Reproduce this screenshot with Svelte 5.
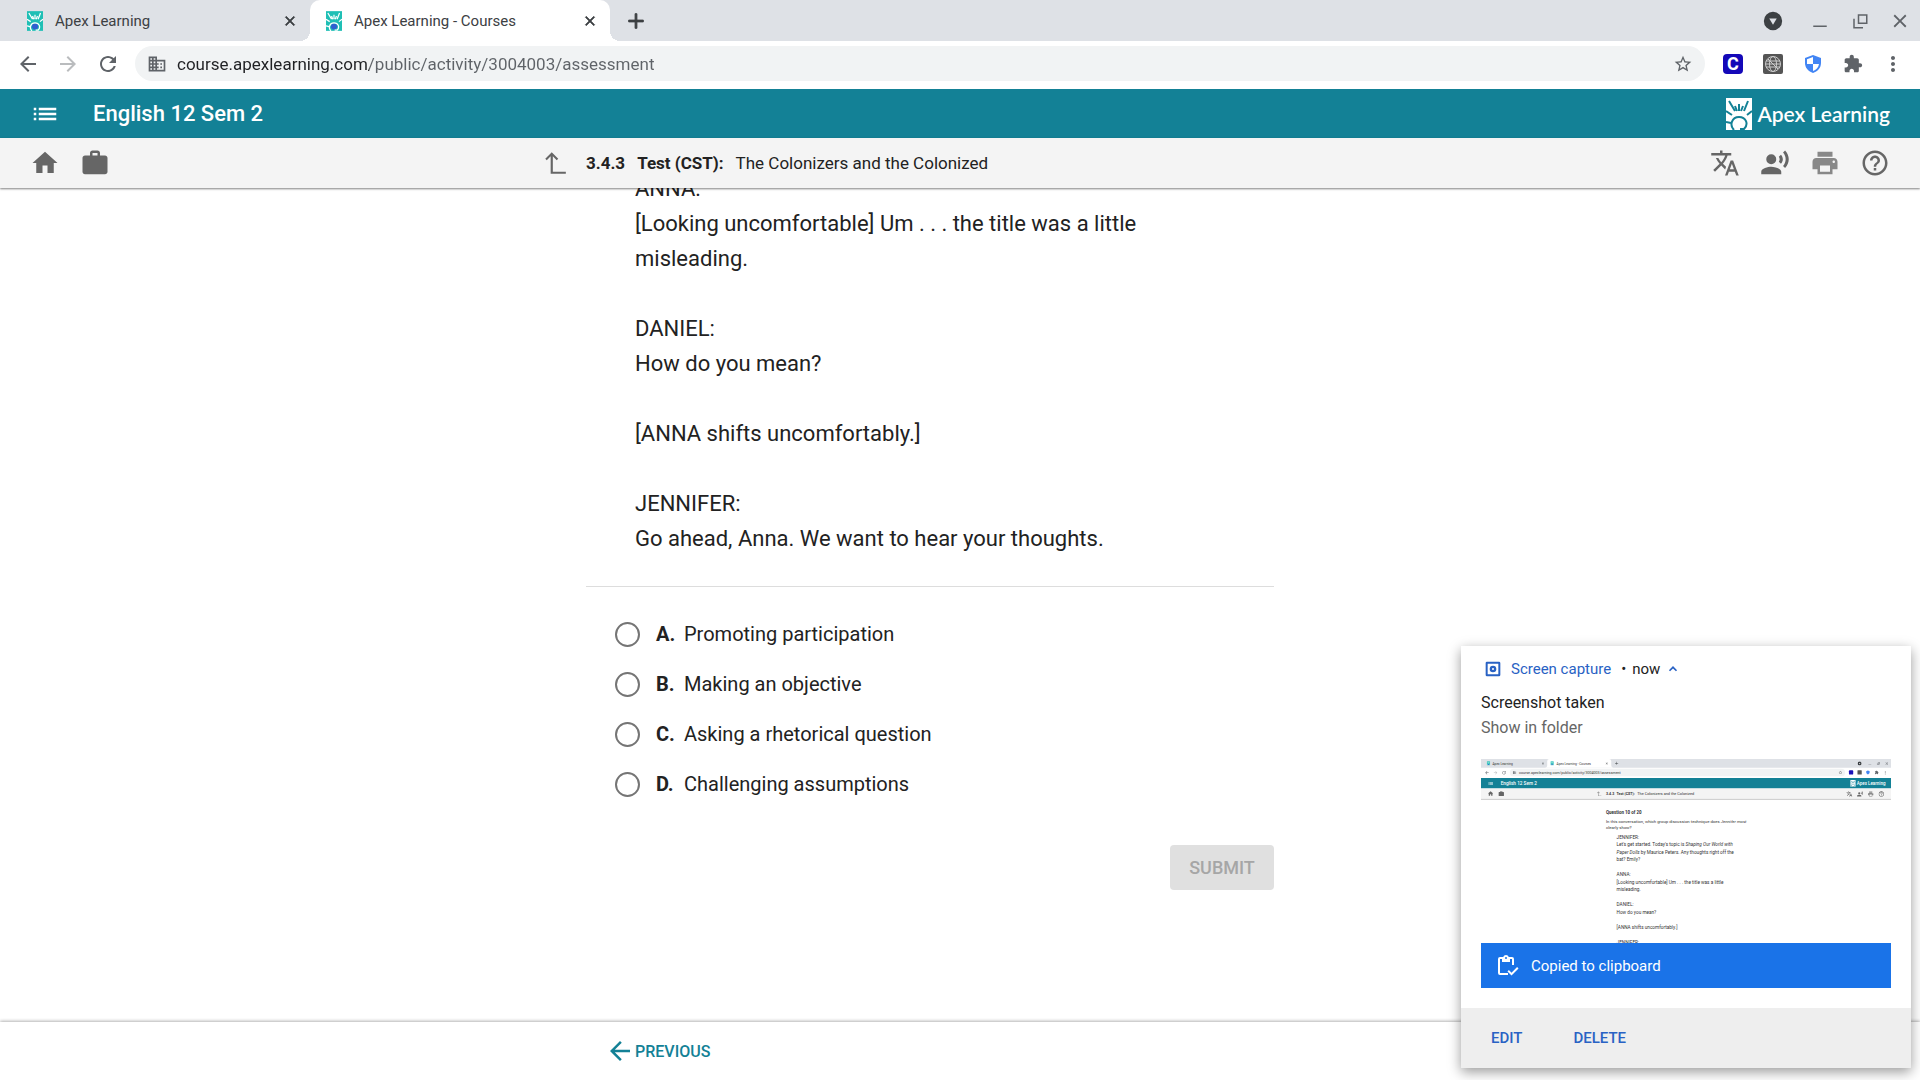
<script>
	const icons = {
		back: 'M20 11H7.83l5.59-5.59L12 4l-8 8 8 8 1.41-1.41L7.83 13H20v-2z',
		forward: 'M12 4l-1.41 1.41L16.17 11H4v2h12.17l-5.58 5.59L12 20l8-8z',
		refresh: 'M17.65 6.35C16.2 4.9 14.21 4 12 4c-4.42 0-7.99 3.58-7.99 8s3.57 8 7.99 8c3.73 0 6.84-2.55 7.73-6h-2.08c-.82 2.33-3.04 4-5.65 4-3.31 0-6-2.69-6-6s2.69-6 6-6c1.66 0 3.14.69 4.22 1.78L13 11h7V4l-2.35 2.35z',
		site: 'M12 7V3H2v18h20V7H12zM6 19H4v-2h2v2zm0-4H4v-2h2v2zm0-4H4V9h2v2zm0-4H4V5h2v2zm4 12H8v-2h2v2zm0-4H8v-2h2v2zm0-4H8V9h2v2zm0-4H8V5h2v2zm10 12h-8v-2h2v-2h-2v-2h2v-2h-2V9h8v10zm-2-8h-2v2h2v-2zm0 4h-2v2h2v-2z',
		star: 'M22 9.24l-7.19-.62L12 2 9.19 8.63 2 9.24l5.46 4.73L5.82 21 12 17.27 18.18 21l-1.63-7.03L22 9.24zM12 15.4l-3.76 2.27 1-4.28-3.32-2.88 4.38-.38L12 6.1l1.71 4.04 4.38.38-3.32 2.88 1 4.28L12 15.4z',
		extension: 'M20.5 11H19V7c0-1.1-.9-2-2-2h-4V3.5C13 2.12 11.88 1 10.5 1S8 2.12 8 3.5V5H4c-1.1 0-1.99.9-1.99 2v3.8H3.5c1.49 0 2.7 1.21 2.7 2.7s-1.21 2.7-2.7 2.7H2V20c0 1.1.9 2 2 2h3.8v-1.5c0-1.49 1.21-2.7 2.7-2.7 1.49 0 2.7 1.21 2.7 2.7V22H17c1.1 0 2-.9 2-2v-4h1.5c1.38 0 2.5-1.12 2.5-2.5S21.88 11 20.5 11z',
		more: 'M12 8c1.1 0 2-.9 2-2s-.9-2-2-2-2 .9-2 2 .9 2 2 2zm0 2c-1.1 0-2 .9-2 2s.9 2 2 2 2-.9 2-2-.9-2-2-2zm0 6c-1.1 0-2 .9-2 2s.9 2 2 2 2-.9 2-2-.9-2-2-2z',
		close: 'M19 6.41L17.59 5 12 10.59 6.41 5 5 6.41 10.59 12 5 17.59 6.41 19 12 13.41 17.59 19 19 17.59 13.41 12z',
		plus: 'M20 13h-7v7h-2v-7H4v-2h7V4h2v7h7z',
		minimize: 'M3 18h18v2H3z',
		restore: 'M9 3h13v13H9zM11 5v9h9V5zM3 9h2v11h11v2H3z',
		dropdown: 'M12 1a11 11 0 1 0 0 22a11 11 0 1 0 0-22zM7.5 9h9L12 16.5z',
		list: 'M3 13h2v-2H3v2zm0 4h2v-2H3v2zm0-8h2V7H3v2zm4 4h14v-2H7v2zm0 4h14v-2H7v2zM7 7v2h14V7H7z',
		home: 'M10 20v-6h4v6h5v-8h3L12 3 2 12h3v8z',
		work: 'M20 6h-4V4c0-1.1-.9-2-2-2h-4c-1.1 0-2 .9-2 2v2H4c-1.1 0-2 .9-2 2v11c0 1.1.9 2 2 2h16c1.1 0 2-.9 2-2V8c0-1.1-.9-2-2-2zm-6 0h-4V4h4v2z',
		up: 'M9 2l6 6-1.4 1.4L10 5.8V20h12v2H8V5.8L4.4 9.4 3 8z',
		translate: 'M12.87 15.07l-2.54-2.51.03-.03c1.74-1.94 2.98-4.17 3.71-6.53H17V4h-7V2H8v2H1v1.99h11.17C11.5 7.92 10.44 9.75 9 11.35 8.07 10.32 7.3 9.19 6.69 8h-2c.73 1.63 1.73 3.17 2.98 4.56l-5.09 5.02L4 19l5-5 3.11 3.11.76-2.04zM18.5 10h-2L12 22h2l1.12-3h4.75L21 22h2l-4.5-12zm-2.62 7l1.62-4.33L19.12 17h-3.24z',
		voice: 'M9 5a4 4 0 1 0 0 8a4 4 0 1 0 0-8zM9 15c-2.67 0-8 1.34-8 4v2h16v-2c0-2.66-5.33-4-8-4zm7.76-9.64l-1.68 1.69c.84 1.18.84 2.71 0 3.89l1.68 1.69c2.02-2.02 2.02-5.07 0-7.27zM20.07 2l-1.63 1.63c2.77 3.02 2.77 7.56 0 10.74L20.07 16c3.9-3.89 3.91-9.95 0-14z',
		print: 'M19 8H5c-1.66 0-3 1.34-3 3v6h4v4h12v-4h4v-6c0-1.66-1.34-3-3-3zm-3 11H8v-5h8v5zm3-7c-.55 0-1-.45-1-1s.45-1 1-1 1 .45 1 1-.45 1-1 1zm-1-9H6v4h12V3z',
		help: 'M11 18h2v-2h-2v2zm1-16C6.48 2 2 6.48 2 12s4.48 10 10 10 10-4.48 10-10S17.52 2 12 2zm0 18c-4.41 0-8-3.59-8-8s3.59-8 8-8 8 3.59 8 8-3.59 8-8 8zm0-14c-2.21 0-4 1.79-4 4h2c0-1.1.9-2 2-2s2 .9 2 2c0 2-3 1.75-3 5h2c0-2.25 3-2.5 3-5 0-2.21-1.79-4-4-4z',
		chevron: 'M12 7l-7 7 2 2L12 11l5 5 2-2z',
		capture: 'M3 1h18a2 2 0 0 1 2 2v18a2 2 0 0 1-2 2H3a2 2 0 0 1-2-2V3a2 2 0 0 1 2-2zM4 4v16h16V4zM12 7a5 5 0 1 1 0 10a5 5 0 1 1 0-10zM12 10.5a1.5 1.5 0 1 0 0 3a1.5 1.5 0 1 0 0-3z',
		clipboard: 'M12 21H4a2 2 0 0 1-2-2V5a2 2 0 0 1 2-2h3.2a3 3 0 0 1 5.6 0H16a2 2 0 0 1 2 2v6h-2V5h-2v3H6V5H4v14h8zM10 3a1 1 0 1 0 0 2a1 1 0 1 0 0-2zM15.5 21.5l-4-4 1.4-1.4 2.6 2.6 5.6-5.6 1.4 1.4z'
	};

	const tabs = [
		{ title: 'Apex Learning', active: false },
		{ title: 'Apex Learning - Courses', active: true }
	];

	const passage = [
		['ANNA:', '[Looking uncomfortable] Um . . . the title was a little misleading.'],
		['DANIEL:', 'How do you mean?'],
		['[ANNA shifts uncomfortably.]'],
		['JENNIFER:', 'Go ahead, Anna. We want to hear your thoughts.']
	];

	const options = [
		{ letter: 'A', text: 'Promoting participation' },
		{ letter: 'B', text: 'Making an objective' },
		{ letter: 'C', text: 'Asking a rhetorical question' },
		{ letter: 'D', text: 'Challenging assumptions' }
	];

	// lines of the captured page, in its own 1920 wide coordinates
	const captured = [
		{ y: 409, text: "Let's get started. Today's topic is ", em: 'Shaping Our World with' },
		{ y: 479, text: 'bat? Emily?' },
		{ y: 549, text: 'ANNA:' },
		{ y: 584, text: '[Looking uncomfortable] Um . . . the title was a little' },
		{ y: 619, text: 'misleading.' },
		{ y: 689, text: 'DANIEL:' },
		{ y: 724, text: 'How do you mean?' },
		{ y: 794, text: '[ANNA shifts uncomfortably.]' },
		{ y: 864, text: 'JENNIFER:' }
	];

	// icons in the captured page: name, x, y, size, fill
	const capturedIcons = [
		['close', 282, 13, 16, '#3c4043'],
		['close', 581, 13, 16, '#3c4043'],
		['plus', 624, 9, 22, '#3c4043'],
		['dropdown', 1763, 11, 20, '#3c4043'],
		['minimize', 1812, 11, 18, '#5f6368'],
		['restore', 1852, 12, 18, '#5f6368'],
		['close', 1890, 11, 21, '#5f6368'],
		['back', 16, 52, 24, '#5f6368'],
		['forward', 56, 52, 24, '#babcbe'],
		['refresh', 96, 52, 24, '#5f6368'],
		['site', 148, 55, 18, '#5f6368'],
		['star', 1673, 53, 20, '#5f6368'],
		['extension', 1843, 53, 20, '#5f6368'],
		['more', 1881, 52, 24, '#5f6368'],
		['list', 30, 99, 30, '#ffffff'],
		['home', 30, 147, 30, '#666666'],
		['work', 80, 147, 30, '#666666'],
		['up', 540, 150, 26, '#777777'],
		['translate', 1710, 149, 30, '#666666'],
		['voice', 1760, 149, 30, '#666666'],
		['print', 1810, 149, 30, '#888888'],
		['help', 1860, 149, 30, '#666666']
	];

	let selected = $state('');
	let address = $state('course.apexlearning.com/public/activity/3004003/assessment');
</script>

{#snippet icon(name, size = 24)}
	<svg class="icon" width={size} height={size} viewBox="0 0 24 24" aria-hidden="true">
		<path fill-rule="evenodd" d={icons[name]} />
	</svg>
{/snippet}

{#snippet sunburst(bg, fg, dot)}
	<rect width="26" height="32" fill={bg} />
	{#if dot}<circle cx="13" cy="25" r="5" fill={dot} />{/if}
	<g fill="none" stroke={fg} stroke-width="2">
		<path d="M3 3l6 10M0 13l6 4M9 8l2 5M13 6v7M17 8l-2 5M22 3l-4 10M26 13l-5 4M0 24l5 1" />
		<path d="M8 32c-5-5-2-13 5-13s10 7 5 12h-4" />
	</g>
{/snippet}

<div class="screen">
	<div class="tabstrip">
		{#each tabs as tab}
			<div class="tab" class:active={tab.active}>
				<svg width="16" height="20" viewBox="0 0 26 32" aria-hidden="true">
					{@render sunburst('#1fbfb5', '#ffffff', '#2f5fd0')}
				</svg>
				<span class="tab-title">{tab.title}</span>
				<button aria-label="Close tab">{@render icon('close', 16)}</button>
			</div>
		{/each}
		<button class="new-tab" aria-label="New tab">{@render icon('plus', 22)}</button>
		<div class="window-buttons">
			<button class="dark" aria-label="Search tabs">{@render icon('dropdown', 20)}</button>
			<button aria-label="Minimize">{@render icon('minimize', 18)}</button>
			<button aria-label="Restore">{@render icon('restore', 18)}</button>
			<button aria-label="Close window">{@render icon('close', 22)}</button>
		</div>
	</div>

	<div class="toolbar">
		<div class="nav-buttons">
			<button aria-label="Back">{@render icon('back')}</button>
			<button class="faded" aria-label="Forward">{@render icon('forward')}</button>
			<button aria-label="Reload">{@render icon('refresh')}</button>
		</div>
		<div class="omnibox">
			{@render icon('site', 20)}
			<input class="url" type="text" aria-label="Address" spellcheck="false" bind:value={address} />
			<button aria-label="Bookmark this page">{@render icon('star', 20)}</button>
		</div>
		<div class="extensions">
			<button class="ext-c" aria-label="C extension">C</button>
			<button aria-label="Globe extension">
				<svg width="20" height="20" viewBox="0 0 20 20">
					<rect width="20" height="20" rx="2" fill="#555555" />
					<g fill="none" stroke="#cccccc">
						<circle cx="10" cy="10" r="7.5" />
						<ellipse cx="10" cy="10" rx="3.5" ry="7.5" />
						<path d="M3 7h14M3 10h14M3 13h14M5 5l10 10" />
					</g>
				</svg>
			</button>
			<button aria-label="Shield extension">
				<svg width="20" height="20" viewBox="0 0 20 20">
					<path d="M10 1l8 3v5c0 5-3.5 8.5-8 10c-4.5-1.5-8-5-8-10V4z" fill="#4285f4" />
					<path d="M10 3v7H4V5.2zM10 10h6c-.5 3.5-3 6-6 7z" fill="#ffffff" />
				</svg>
			</button>
			<button aria-label="Extensions">{@render icon('extension', 20)}</button>
			<button aria-label="Menu">{@render icon('more', 24)}</button>
		</div>
	</div>

	<header class="course-bar">
		<button aria-label="Contents">{@render icon('list', 30)}</button>
		<h1>English 12 Sem 2</h1>
		<div class="brand">
			<svg width="26" height="32" viewBox="0 0 26 32" aria-hidden="true">
				{@render sunburst('#ffffff', '#138196', '')}
			</svg>
			<span>Apex Learning</span>
		</div>
	</header>

	<nav class="activity-bar">
		<div class="group">
			<button aria-label="Home">{@render icon('home', 30)}</button>
			<button aria-label="Portfolio">{@render icon('work', 30)}</button>
		</div>
		<div class="activity">
			<button class="up" aria-label="Up">{@render icon('up', 26)}</button>
			<p><b>3.4.3</b><b>Test (CST):</b>The Colonizers and the Colonized</p>
		</div>
		<div class="group right">
			<button aria-label="Translate">{@render icon('translate', 30)}</button>
			<button aria-label="Read aloud">{@render icon('voice', 30)}</button>
			<button class="light" aria-label="Print">{@render icon('print', 30)}</button>
			<button aria-label="Help">{@render icon('help', 30)}</button>
		</div>
	</nav>

	<main>
		<div class="column">
			<div class="passage">
				{#each passage as lines}
					<p>
						{#each lines as line}<span>{line}</span>{/each}
					</p>
				{/each}
			</div>
			<hr />
			<form onsubmit={(e) => e.preventDefault()}>
				{#each options as option}
					<label>
						<input type="radio" name="answer" value={option.letter} bind:group={selected} />
						<b>{option.letter}.</b>{option.text}
					</label>
				{/each}
				<button class="submit" disabled={!selected}>SUBMIT</button>
			</form>
		</div>
	</main>

	<footer>
		<div class="column">
			<a href="#previous">{@render icon('back', 30)}PREVIOUS</a>
		</div>
	</footer>

	<aside class="notification">
		<div class="body">
			<div class="source">
				{@render icon('capture', 16)}
				<span class="app">Screen capture</span>
				<div class="time">
					<span>•</span>
					<span>now</span>
					<button aria-label="Collapse">{@render icon('chevron', 14)}</button>
				</div>
			</div>
			<p class="title">Screenshot taken</p>
			<p class="hint">Show in folder</p>
			<div class="preview">
				<svg viewBox="0 0 1920 1074" role="img" aria-label="Captured page">
					<rect width="1920" height="1074" fill="#ffffff" />
					<rect width="1920" height="41" fill="#dee1e6" />
					<path d="M300 41q10 0 10-10V10q0-10 10-10h280q10 0 10 10v21q0 10 10 10z" fill="#ffffff" />
					<rect x="135" y="46" width="1570" height="35" rx="17" fill="#f1f3f4" />
					<rect y="89" width="1920" height="49" fill="#138196" />
					<rect y="138" width="1920" height="50" fill="#f4f4f4" />
					<rect y="187" width="1920" height="3" fill="#b0b0b0" />
					<svg x="27" y="10" width="16" height="20" viewBox="0 0 26 32">
						{@render sunburst('#1fbfb5', '#ffffff', '#2f5fd0')}
					</svg>
					<svg x="325" y="10" width="16" height="20" viewBox="0 0 26 32">
						{@render sunburst('#1fbfb5', '#ffffff', '#2f5fd0')}
					</svg>
					<svg x="1729" y="98" width="26" height="32" viewBox="0 0 26 32">
						{@render sunburst('#ffffff', '#138196', '')}
					</svg>
					<rect x="1723" y="53" width="20" height="20" rx="4" fill="#1a10b8" />
					<rect x="1763" y="53" width="20" height="20" rx="2" fill="#555555" />
					<path d="M1812 54l8 3v5c0 5-3 8-8 10c-5-2-8-5-8-10v-5z" fill="#4285f4" />
					{#each capturedIcons as [name, x, y, size, fill]}
						<svg {x} {y} width={size} height={size} viewBox="0 0 24 24">
							<path fill-rule="evenodd" d={icons[name]} {fill} />
						</svg>
					{/each}
					<text x="54" y="26" font-size="15">Apex Learning</text>
					<text x="354" y="26" font-size="15">Apex Learning - Courses</text>
					<text x="178" y="70" font-size="17">{address}</text>
					<text x="92" y="121" font-size="22" font-weight="500" class="white">English 12 Sem 2</text>
					<text x="1760" y="121" font-size="21" font-weight="500" class="white">Apex Learning</text>
					<text x="585" y="169" font-size="17" font-weight="700">3.4.3</text>
					<text x="634" y="169" font-size="17" font-weight="700">Test (CST):</text>
					<text x="732" y="169" font-size="18">The Colonizers and the Colonized</text>
					<text x="585" y="257" font-size="21" font-weight="700">Question 10 of 20</text>
					<text x="585" y="302" font-size="20">In this conversation, which group discussion technique does <tspan font-style="italic">Jennifer most</tspan></text>
					<text x="585" y="327" font-size="20">clearly show?</text>
					<g font-size="22">
						<text x="635" y="374">JENNIFER:</text>
						<text x="635" y="444"><tspan font-style="italic">Paper Dolls</tspan> by Maurice Peters. Any thoughts right off the</text>
						{#each captured as line}
							<text x="635" y={line.y}>{line.text}{#if line.em}<tspan font-style="italic">{line.em}</tspan>{/if}</text>
						{/each}
					</g>
				</svg>
				<div class="copied">{@render icon('clipboard', 24)}Copied to clipboard</div>
			</div>
		</div>
		<div class="actions">
			<button>EDIT</button>
			<button>DELETE</button>
		</div>
	</aside>
</div>

<style>
	:global(body) {
		margin: 0;
	}

	.screen {
		position: relative;
		display: flex;
		flex-direction: column;
		height: 100vh;
		overflow: hidden;
		background: #fff;
		color: #222;
		font-family: Roboto, sans-serif;
	}

	button {
		display: flex;
		align-items: center;
		justify-content: center;
		padding: 0;
		border: none;
		background: none;
		color: inherit;
		font: inherit;
	}

	p,
	h1 {
		margin: 0;
	}

	.icon {
		display: block;
		flex: none;
		fill: currentColor;
	}

	/* browser frame */
	.tabstrip {
		display: flex;
		height: 41px;
		background: #dee1e6;
		color: #3c4043;
	}

	.tab {
		position: relative;
		display: flex;
		align-items: center;
		gap: 12px;
		box-sizing: border-box;
		width: 300px;
		padding: 0 12px 0 16px;
		font-size: 15px;
	}

	.tab:first-child {
		width: 310px;
		padding-left: 27px;
	}

	.tab-title {
		flex: 1;
	}

	.tab .icon,
	.new-tab .icon {
		stroke: currentColor;
	}

	.tab.active {
		border-radius: 10px 10px 0 0;
		background: #fff;
	}

	.tab.active::before,
	.tab.active::after {
		content: '';
		position: absolute;
		bottom: 0;
		width: 10px;
		height: 10px;
	}

	.tab.active::before {
		right: 100%;
		background: radial-gradient(circle at 0 0, transparent 10px, #fff 10px);
	}

	.tab.active::after {
		left: 100%;
		background: radial-gradient(circle at 100% 0, transparent 10px, #fff 10px);
	}

	.new-tab {
		margin-left: 15px;
	}

	.window-buttons {
		display: flex;
		align-items: center;
		gap: 20px;
		margin-left: auto;
		padding-right: 10px;
		color: #5f6368;
	}

	.window-buttons button {
		width: 20px;
	}

	.window-buttons .dark {
		margin-right: 7px;
		color: #3c4043;
	}

	.toolbar {
		display: flex;
		align-items: center;
		height: 45px;
		padding: 0 17px 3px 16px;
		gap: 15px;
		color: #5f6368;
	}

	.nav-buttons,
	.extensions {
		display: flex;
		align-items: center;
		gap: 16px;
	}

	.extensions {
		gap: 20px;
		padding-left: 3px;
	}

	.extensions button {
		width: 20px;
	}

	.toolbar .faded {
		color: #babcbe;
	}

	.omnibox {
		display: flex;
		flex: 1;
		align-items: center;
		gap: 10px;
		height: 35px;
		padding: 0 12px 0 12px;
		border-radius: 18px;
		background: #f1f3f4;
	}

	/* host part dark, path part grey */
	.url {
		flex: 1;
		padding: 0;
		border: none;
		outline: none;
		background: linear-gradient(to right, #202124 192px, #5f6368 192px);
		background-clip: text;
		color: transparent;
		caret-color: #202124;
		font-family: inherit;
		font-size: 17px;
	}

	.extensions .ext-c {
		height: 20px;
		border-radius: 4px;
		background: #1408b8;
		color: #fff;
		font-size: 18px;
		font-weight: 700;
	}

	/* course header */
	.course-bar {
		display: flex;
		align-items: center;
		height: 49px;
		padding: 0 30px;
		background: #138196;
		color: #fff;
	}

	.course-bar h1 {
		margin-left: 33px;
		font-size: 22px;
		font-weight: 500;
	}

	.brand {
		display: flex;
		align-items: center;
		gap: 5px;
		margin-left: auto;
		font-family: Lato, sans-serif;
		font-size: 21px;
		font-weight: 600;
	}

	.activity-bar {
		position: relative;
		z-index: 1;
		display: grid;
		grid-template-columns: 1fr 836px 1fr;
		align-items: center;
		height: 50px;
		padding: 0 30px;
		background: #f4f4f4;
		box-shadow: 0 1px 2px rgba(0, 0, 0, 0.5);
		color: #666;
	}

	.group {
		display: flex;
		gap: 20px;
	}

	.right {
		justify-content: flex-end;
	}

	.light {
		color: #888;
	}

	.activity {
		display: flex;
		align-items: center;
		gap: 18px;
		font-size: 17px;
	}

	.activity p {
		color: #222;
	}

	.activity b {
		margin-right: 12px;
	}

	/* question */
	main {
		flex: 1;
		min-height: 0;
		display: flex;
		justify-content: center;
	}

	.column {
		width: 688px;
		margin: 0 60px 0 0;
	}

	.passage {
		margin-top: -17px;
		padding: 0 49px;
		font-size: 22px;
		line-height: 35px;
	}

	.passage p {
		margin-bottom: 35px;
	}

	.passage p:last-child {
		margin-bottom: 30px;
	}

	.passage span {
		display: block;
	}

	hr {
		height: 1px;
		margin: 0 0 22px;
		border: none;
		background: #ddd;
	}

	label {
		display: flex;
		align-items: center;
		height: 50px;
		padding-left: 29px;
		font-size: 20px;
	}

	label b {
		width: 28px;
	}

	input[type='radio'] {
		appearance: none;
		box-sizing: border-box;
		width: 25px;
		height: 25px;
		margin: 0 16px 0 0;
		border: 2px solid #757575;
		border-radius: 50%;
	}

	input[type='radio']:checked {
		background: #138196;
		box-shadow: inset 0 0 0 4px #fff;
	}

	.submit {
		width: 104px;
		height: 45px;
		margin: 36px 0 0 auto;
		border-radius: 4px;
		background: #e0e0e0;
		color: #a6a6a6;
		font-size: 18px;
		font-weight: 500;
	}

	footer {
		position: relative;
		display: flex;
		justify-content: center;
		height: 58px;
		background: #fff;
		box-shadow: 0 -1px 3px rgba(0, 0, 0, 0.3);
	}

	footer a {
		display: inline-flex;
		align-items: center;
		height: 58px;
		padding-left: 19px;
		color: #138196;
		font-size: 16px;
		font-weight: 500;
		text-decoration: none;
	}

	/* system notification over the page */
	.notification {
		position: absolute;
		z-index: 2;
		right: 9px;
		bottom: 12px;
		width: 450px;
		background: #fff;
		box-shadow: 0 4px 12px rgba(0, 0, 0, 0.4);
		font-size: 15px;
	}

	.body {
		padding: 11px 20px 20px;
	}

	.source,
	.time {
		display: flex;
		align-items: center;
	}

	.source {
		gap: 10px;
		height: 25px;
		padding-left: 4px;
	}

	.time {
		gap: 6px;
	}

	.source .icon,
	.app {
		color: #2962c4;
	}

	.title,
	.hint {
		font-size: 16px;
		line-height: 25px;
	}

	.title {
		margin-top: 8px;
	}

	.hint {
		color: #666;
	}

	.preview {
		position: relative;
		margin-top: 19px;
	}

	.preview > svg {
		display: block;
		width: 100%;
	}

	.preview text {
		fill: #333;
	}

	.preview .white {
		fill: #fff;
	}

	.copied {
		position: absolute;
		right: 0;
		bottom: 0;
		left: 0;
		display: flex;
		align-items: center;
		gap: 11px;
		height: 45px;
		padding-left: 15px;
		background: #1a73e8;
		color: #fff;
	}

	.actions {
		display: flex;
		align-items: center;
		gap: 51px;
		height: 60px;
		padding-left: 30px;
		background: #eee;
		color: #2962c4;
		font-weight: 500;
	}
</style>
